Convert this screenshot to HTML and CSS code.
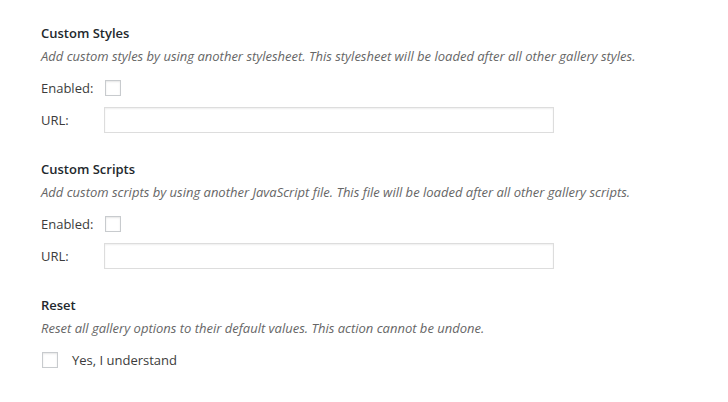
FILE: index.html
```html
<!DOCTYPE html>
<html lang="en">
<head>
    <meta charset="UTF-8">
    <title>Gallery Settings</title>
    <link rel="stylesheet" href="styles.css">
</head>
<body>

    <div class="settings">
        <!-- Custom Styles -->
        <div class="section">
            <h3>Custom Styles</h3>
            <p class="description">Add custom styles by using another stylesheet. This stylesheet will be loaded after all other gallery styles.</p>
            <div class="field">
                <label for="stylesEnabled">Enabled:</label>
                <input type="checkbox" id="stylesEnabled" class="check">
            </div>
            <div class="field">
                <label for="stylesUrl">URL:</label>
                <input type="text" id="stylesUrl" class="text">
            </div>
        </div>

        <!-- Custom Scripts -->
        <div class="section">
            <h3>Custom Scripts</h3>
            <p class="description">Add custom scripts by using another JavaScript file. This file will be loaded after all other gallery scripts.</p>
            <div class="field">
                <label for="scriptsEnabled">Enabled:</label>
                <input type="checkbox" id="scriptsEnabled" class="check">
            </div>
            <div class="field">
                <label for="scriptsUrl">URL:</label>
                <input type="text" id="scriptsUrl" class="text">
            </div>
        </div>

        <!-- Reset -->
        <div class="section">
            <h3>Reset</h3>
            <p class="description">Reset all gallery options to their default values. This action cannot be undone.</p>
            <div class="field confirm">
                <input type="checkbox" id="resetConfirm" class="check">
                <label for="resetConfirm">Yes, I understand</label>
            </div>
        </div>
    </div>

</body>
</html>
```

FILE: styles.css
```css
body {
    font-family: "Open Sans", sans-serif;
    font-size: 13px;
    color: #3c3c3c;
    background-color: #fff;
    margin: 0;
}

.settings {
    padding: 23px 0 0 41px;
}

.section {
    margin-bottom: 26px;
}

h3 {
    font-size: 13px;
    font-weight: 600;
    line-height: 20px;
    color: #23282d;
    margin: 0 0 3px;
}

.description {
    font-style: italic;
    line-height: 20px;
    color: #666;
    margin: 0 0 9px;
}

.field {
    display: flex;
    align-items: center;
    height: 26px;
    margin-bottom: 6px;
}

.field label {
    width: 63px;
    line-height: 20px;
}

.check {
    appearance: none;
    width: 16px;
    height: 16px;
    margin: 0 0 0 1px;
    border: 1px solid #c8cbce;
    border-radius: 0;
    background-color: #fff;
    box-shadow: inset 0 1px 2px rgba(0, 0, 0, 0.1);
}

.text {
    width: 450px;
    height: 26px;
    padding: 3px 5px;
    box-sizing: border-box;
    border: 1px solid #ddd;
    background-color: #fff;
    box-shadow: inset 0 1px 2px rgba(0, 0, 0, 0.07);
    margin: 0;
}

.confirm .check {
    margin-right: 14px;
}

.confirm label {
    width: auto;
}
```
